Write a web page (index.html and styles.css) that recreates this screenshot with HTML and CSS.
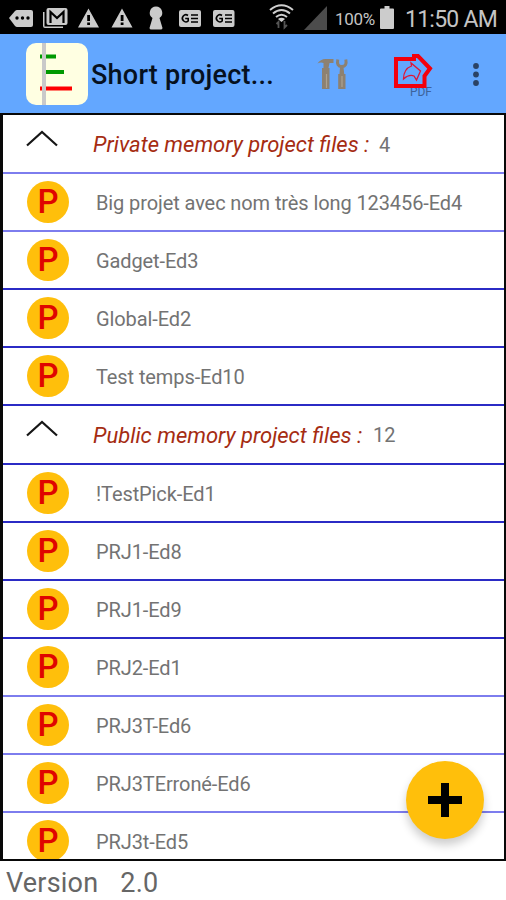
FILE: index.html
```html
<!DOCTYPE html>
<html lang="en">
<head>
<meta charset="utf-8">
<title>Short project</title>
<link rel="stylesheet" href="styles.css">
</head>
<body>
<div class="status">
  <svg class="status-icons" width="330" height="34" viewBox="0 0 330 34">
    <g fill="#cbcbcb">
      <path d="M9 18l6-7q1-1 2-1h14q2 0 2 2v13q0 2-2 2H17q-1 0-2-1z"/>
      <path d="M43 12h1.500v14.500H63V28H45q-2 0-2-2z"/>
      <rect x="46.500" y="8" width="21" height="17" rx="2"/>
      <path d="M88.500 8.500L99 27.500H78zM122 8.500l10.500 19h-21z"/>
      <path d="M156 6.500a6.300 6.300 0 0 1 3.500 11.500l3 10q0 1.500-2 1.500h-9q-2 0-2-1.500l3-10a6.300 6.300 0 0 1 3.500-11.500z"/>
      <rect x="179" y="10" width="22" height="17" rx="2"/>
      <rect x="213" y="10" width="21.500" height="17" rx="2"/>
    </g>
    <g fill="#000">
      <circle cx="17" cy="18" r="1.700"/><circle cx="22.500" cy="18" r="1.700"/><circle cx="28" cy="18" r="1.700"/>
      <path d="M87.200 15h2.800v6h-2.800zm0 7.500h2.800v2.500h-2.800zM120.700 15h2.800v6h-2.800zm0 7.500h2.800v2.500h-2.800z"/>
    </g>
    <g fill="none" stroke="#000" stroke-width="1.600">
      <path d="M50.500 23V12l6.500 6 6.500-6v11" stroke-width="2.200"/>
      <path d="M188 15.500a3.500 3.500 0 1 0 .2 5.500v-2.500h-3M191 15h7M191 18.500h7M191 22h7"/>
      <path d="M222 15.500a3.500 3.500 0 1 0 .2 5.500v-2.500h-3M225 15h7M225 18.500h7M225 22h7"/>
    </g>
    <g fill="none" stroke="#cfcfcf" stroke-width="2">
      <path d="M270 10q11.500-9.500 23 0M273 13.500q8.500-7 17 0M276 17q5.500-4.500 11 0"/>
    </g>
    <path d="M278 19q3.500-2.500 7 0l-3.500 3z" fill="#cfcfcf"/>
    <path d="M278.500 28v-6l-2 2M284.500 21v6.500l2.500-2.500" fill="none" stroke="#555" stroke-width="1.800"/>
    <path d="M304 30L327 6v24z" fill="#4c4c4c"/>
  </svg>
  <span class="percent">100%</span>
  <svg class="battery" width="14" height="24" viewBox="0 0 14 24"><path d="M4.500 0h5v2.500H13q1 0 1 1V22q0 1-1 1H1q-1 0-1-1V3.500q0-1 1-1h3.500z" fill="#ccc"/></svg>
  <span class="clock">11:50 AM</span>
</div>
<header class="appbar">
  <svg class="logo" width="62" height="63" viewBox="0 0 62 63">
    <rect y="1" width="62" height="62" rx="10" fill="#ffffe2"/>
    <path d="M14 14.500h16M20 30h18" stroke="#090" stroke-width="4"/>
    <path d="M14 46.500h32" stroke="#f00" stroke-width="4"/>
    <path d="M18 1v62" stroke="#c9c9c9" stroke-width="4"/>
  </svg>
  <h1 class="title">Short project...</h1>
  <svg class="actions" width="190" height="78" viewBox="316 34 190 78">
    <path d="M317.500 62.500q3-4.500 8-4.500h8v4h-4l-1 5h1v21h-7.500V67h1.500v-5q-3-1-6 .5z" fill="#8d8171"/>
    <path d="M337.800 58.500q-1.500 7 4 7t4-7" fill="none" stroke="#8d8171" stroke-width="3"/>
    <path d="M340 66h3.500l.7 7h1.300v15h-7.300V73h1.300z" fill="#8d8171"/>
    <path d="M326.500 73v14M342 75v11" stroke="#ada290" stroke-width="1.200"/>
    <text class="pdf" x="410" y="94.500" textLength="22">PDF</text>
    <path d="M396 58h18v-3h4L430 67.500 424.500 75v10h-28.500z" fill="none" stroke="#f3000c" stroke-width="4"/>
    <path d="M403.500 78q0-10 8-13l-.5-3 9.500 8-4 9-2.500-4q-5-2-10.500 3z" fill="none" stroke="#e21434" stroke-width="1.300"/>
    <g fill="#2a4265"><circle cx="476" cy="65" r="2.900"/><circle cx="476" cy="73.500" r="2.900"/><circle cx="476" cy="82" r="2.900"/></g>
  </svg>
</header>
<main class="panel">
  <div class="row head soft"><svg class="chevron" width="32" height="17" viewBox="0 0 32 17"><path d="M1 15.500L16 2l15 13.500"/></svg><span class="group g1">Private memory project files :</span><span class="count">4</span></div>
  <div class="row soft"><span class="badge">P</span><span class="name">Big projet avec nom très long 123456-Ed4</span></div>
  <div class="row"><span class="badge">P</span><span class="name">Gadget-Ed3</span></div>
  <div class="row"><span class="badge">P</span><span class="name">Global-Ed2</span></div>
  <div class="row"><span class="badge">P</span><span class="name">Test temps-Ed10</span></div>
  <div class="row head"><svg class="chevron" width="32" height="17" viewBox="0 0 32 17"><path d="M1 15.500L16 2l15 13.500"/></svg><span class="group g2">Public memory project files :</span><span class="count">12</span></div>
  <div class="row"><span class="badge">P</span><span class="name">!TestPick-Ed1</span></div>
  <div class="row"><span class="badge">P</span><span class="name">PRJ1-Ed8</span></div>
  <div class="row"><span class="badge">P</span><span class="name">PRJ1-Ed9</span></div>
  <div class="row soft"><span class="badge">P</span><span class="name">PRJ2-Ed1</span></div>
  <div class="row soft"><span class="badge">P</span><span class="name">PRJ3T-Ed6</span></div>
  <div class="row soft"><span class="badge">P</span><span class="name">PRJ3TErroné-Ed6</span></div>
  <div class="row"><span class="badge">P</span><span class="name">PRJ3t-Ed5</span></div>
</main>
<footer class="version"><span>Version</span><span>2.0</span></footer>
<button class="fab" aria-label="Add"><svg width="34" height="34" viewBox="0 0 34 34"><path d="M17 0v34M0 17h34" stroke="#000" stroke-width="8"/></svg></button>
</body>
</html>
```
FILE: styles.css
```css
* { box-sizing: border-box; }
body {
  margin: 0;
  height: 900px;
  overflow: hidden;
  position: relative;
  display: flex;
  flex-direction: column;
  background: #fff;
  font-family: Roboto, "Liberation Sans", sans-serif;
  color: #737373;
}
.status {
  height: 34px;
  flex: none;
  display: flex;
  align-items: center;
  background: #000;
  color: #c4c4c4;
  white-space: nowrap;
}
.status-icons { flex: none; }
.percent { width: 50px; padding: 3px 0 0 5px; font-size: 17px; letter-spacing: -0.3px; }
.battery { flex: none; margin-top: 1px; }
.clock { margin: 4px 0 0 11px; font-size: 23px; letter-spacing: -0.75px; }
.appbar {
  height: 79px;
  flex: none;
  display: flex;
  align-items: center;
  background: #63a7ff;
}
.logo { flex: none; margin-left: 26px; }
.title {
  width: 225px;
  margin: 2px 0 0 3px;
  font-size: 27px;
  font-weight: 500;
  letter-spacing: 0.25px;
  white-space: nowrap;
  color: #06111f;
}
.actions { flex: none; }
.pdf { font-size: 12px; fill: #3c639b; }
.panel {
  height: 748px;
  flex: none;
  overflow: hidden;
  padding-top: 1px;
  border: 2px solid #080808;
  border-left-width: 3px;
}
.row {
  height: 58.1px;
  display: flex;
  align-items: center;
  padding-left: 24px;
  border-bottom: 2px solid #2b2bc5;
  white-space: nowrap;
}
.soft { border-bottom-color: #7d7dee; }
.badge {
  width: 42px;
  height: 42px;
  flex: none;
  display: flex;
  align-items: center;
  justify-content: center;
  border-radius: 50%;
  background: #ffbf0b;
  color: #df0500;
  font-size: 33px;
  font-weight: 500;
  line-height: 42px;
}
.name { margin: 2px 0 0 27px; font-size: 20px; letter-spacing: -0.1px; }
.row.head { padding-left: 23px; }
.chevron { flex: none; margin-top: -12px; fill: none; stroke: #161616; stroke-width: 2.2; }
.group {
  margin: 1px 0 0 35px;
  width: 286px;
  font-size: 22px;
  font-style: italic;
  color: #a52c12;
}
.g2 { width: 280px; }
.count { margin-top: 1px; font-size: 20px; }
.version {
  display: flex;
  gap: 22px;
  padding: 6px 0 0 6px;
  font-size: 27px;
  line-height: 33px;
  letter-spacing: 0.2px;
  color: #666;
}
.fab {
  position: absolute;
  left: 406px;
  top: 761px;
  width: 78px;
  height: 78px;
  padding: 0;
  display: flex;
  align-items: center;
  justify-content: center;
  border: 0;
  border-radius: 50%;
  background: #ffbf0b;
  box-shadow: 0 6px 10px rgba(0, 0, 0, .2);
}
```
